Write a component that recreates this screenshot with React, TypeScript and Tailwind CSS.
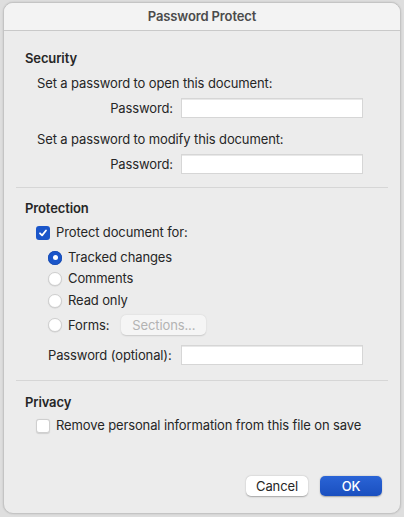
import React from "react";

function Radio({ checked }: { checked?: boolean }) {
  return checked ? (
    <span className="flex h-[14px] w-[14px] shrink-0 items-center justify-center rounded-full bg-[#1a55c9] shadow-[inset_0_0_0_0.5px_#0f43aa]">
      <span className="h-[5px] w-[5px] rounded-full bg-white" />
    </span>
  ) : (
    <span className="h-[14px] w-[14px] shrink-0 rounded-full border border-[#cfcfcf] bg-white shadow-[0_0.5px_1px_rgba(0,0,0,0.12)]" />
  );
}

function Check({ checked }: { checked?: boolean }) {
  return checked ? (
    <span className="flex h-[14px] w-[14px] shrink-0 items-center justify-center rounded-[3px] bg-[#1a55c9]">
      <svg width="10" height="10" viewBox="0 0 10 10">
        <path d="M2 5.3 L4.1 7.4 L8 2.5" fill="none" stroke="white" strokeWidth="1.8" strokeLinecap="round" strokeLinejoin="round" />
      </svg>
    </span>
  ) : (
    <span className="h-[14px] w-[14px] shrink-0 rounded-[3px] border border-[#cfcfcf] bg-white shadow-[0_0.5px_1px_rgba(0,0,0,0.12)]" />
  );
}

function Field() {
  return <div className="h-[20px] w-[182px] border border-[#d6d6d6] bg-white shadow-[inset_0_1px_0_#e8e8e8]" />;
}

export default function App() {
  return (
    <div
      className="h-[517px] w-[404px] bg-[#dedede] pl-[3px] pr-[3px] pt-[2px] pb-[3px] text-[13px] tracking-[-0.12px] text-[#262626]"
      style={{ fontFamily: "Inter, 'Noto Sans', sans-serif" }}
    >
      <div className="flex h-full flex-col overflow-hidden rounded-[10px] border border-[#c4c4c4] bg-[#ececec] shadow-[0_0_2px_rgba(0,0,0,0.15)]">
        <div className="flex h-[28px] shrink-0 items-center justify-center border-b border-[#c9c9c9] bg-[#f3f3f3] pt-[1px] text-[13px] font-semibold text-[#4b4b4b]">
          Password Protect
        </div>

        <div className="flex flex-1 flex-col px-[12px]">
          {/* Security */}
          <div className="flex flex-col pl-[9px]">
            <div className="mt-[19px] font-semibold leading-[17px]">Security</div>
            <div className="mt-[8px] pl-[12px] leading-[17px]">Set a password to open this document:</div>
            <div className="mt-[6px] flex items-center">
              <span className="w-[148px] text-right leading-[17px]">Password:</span>
              <span className="ml-[8px]"><Field /></span>
            </div>
            <div className="mt-[13px] pl-[12px] leading-[17px]">Set a password to modify this document:</div>
            <div className="mt-[6px] flex items-center">
              <span className="w-[148px] text-right leading-[17px]">Password:</span>
              <span className="ml-[8px]"><Field /></span>
            </div>
          </div>

          <div className="mt-[13px] h-px bg-[#d6d6d6]" />

          {/* Protection */}
          <div className="flex flex-col pl-[9px]">
            <div className="mt-[12px] font-semibold leading-[17px]">Protection</div>
            <div className="mt-[7px] flex items-center gap-[6px] pl-[11px] leading-[17px]">
              <Check checked />
              <span>Protect document for:</span>
            </div>
            <div className="mt-[8px] flex items-center gap-[6px] pl-[23px] leading-[17px]">
              <Radio checked />
              <span>Tracked changes</span>
            </div>
            <div className="mt-[4px] flex items-center gap-[6px] pl-[23px] leading-[17px]">
              <Radio />
              <span>Comments</span>
            </div>
            <div className="mt-[5px] flex items-center gap-[6px] pl-[23px] leading-[17px]">
              <Radio />
              <span>Read only</span>
            </div>
            <div className="mt-[6px] flex items-center pl-[23px] leading-[17px]">
              <Radio />
              <span className="ml-[6px]">Forms:</span>
              <span className="ml-[12px] flex h-[20px] w-[85px] items-center justify-center rounded-[5px] bg-[#f5f5f5] text-[#b3b3b3] shadow-[0_0.5px_1.5px_rgba(0,0,0,0.15)]">
                Sections...
              </span>
            </div>
            <div className="mt-[10px] flex items-center pl-[23px] leading-[17px]">
              <span className="w-[133px]">Password (optional):</span>
              <Field />
            </div>
          </div>

          <div className="mt-[15px] h-px bg-[#d6d6d6]" />

          {/* Privacy */}
          <div className="flex flex-col pl-[9px]">
            <div className="mt-[13px] font-semibold leading-[17px]">Privacy</div>
            <div className="mt-[6px] flex items-center gap-[6px] pl-[11px] leading-[17px]">
              <Check />
              <span>Remove personal information from this file on save</span>
            </div>
          </div>

          <div className="mt-auto mb-[17px] flex justify-end gap-[12px] pr-[6px]">
            <button className="h-[20px] w-[62px] rounded-[5px] bg-white text-[13px] leading-[20px] text-[#262626] shadow-[0_0.5px_1.5px_rgba(0,0,0,0.3)]">
              Cancel
            </button>
            <button className="h-[20px] w-[62px] rounded-[5px] bg-gradient-to-b from-[#2a64d6] to-[#1a4fbf] text-[13px] font-medium leading-[20px] text-white shadow-[0_0.5px_1.5px_rgba(0,0,0,0.3)]">
              OK
            </button>
          </div>
        </div>
      </div>
    </div>
  );
}
